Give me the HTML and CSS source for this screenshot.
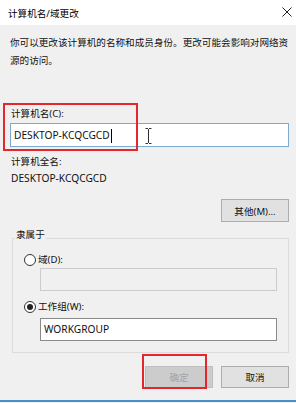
FILE: index.html
```html
<!DOCTYPE html>
<html>
<head>
<meta charset="utf-8">
<title>计算机名/域更改</title>
<link rel="stylesheet" href="styles.css">
</head>
<body>
<div class="dialog">
    <div class="titlebar">
        <span class="title">计算机名/域更改</span>
        <svg class="close" width="10" height="10" viewBox="0 0 10 10"><path d="M0.5 0.5 L9.5 9.5 M9.5 0.5 L0.5 9.5" stroke="#222" stroke-width="1" fill="none"/></svg>
    </div>
    <div class="content">
        <p class="desc">你可以更改该计算机的名称和成员身份。更改可能会影响对网络资源的访问。</p>

        <div class="name-field">
            <div class="label">计算机名(C):</div>
            <div class="textbox focused"><span class="latin">DESKTOP-KCQCGCD</span><span class="caret"></span>
                <svg class="ibeam" width="7" height="16" viewBox="0 0 7 16"><path d="M0.5 0.5 H3 M4 0.5 H6.5 M3.5 1 V15 M0.5 15.5 H3 M4 15.5 H6.5" stroke="#333" stroke-width="1" fill="none"/></svg>
            </div>
            <div class="mark mark-name"></div>
        </div>

        <div class="fullname">
            <div class="line">计算机全名:</div>
            <div class="line latin">DESKTOP-KCQCGCD</div>
        </div>

        <div class="row-right">
            <button type="button" class="btn">其他(M)...</button>
        </div>

        <fieldset class="group">
            <legend>隶属于</legend>
            <div class="radio-row"><span class="radio"></span>域(D):</div>
            <div class="textbox sub disabled"></div>
            <div class="radio-row second"><span class="radio checked"></span>工作组(W):</div>
            <div class="textbox sub"><span class="latin">WORKGROUP</span></div>
        </fieldset>

        <div class="actions">
            <div class="ok-wrap">
                <button type="button" class="btn" disabled>确定</button>
                <div class="mark mark-ok"></div>
            </div>
            <button type="button" class="btn">取消</button>
        </div>
    </div>
    <div class="footer-line"></div>
</div>
</body>
</html>
```

FILE: styles.css
```css
body {
    margin: 0;
    background: #f0f0f0;
    font-family: "Noto Sans", "Noto Sans CJK SC", sans-serif;
    font-size: 9.6px;
    color: #111;
}
.latin {
    font-size: 10.2px;
}
.dialog {
    width: 296px;
    height: 403px;
    overflow: hidden;
}
.titlebar {
    height: 25px;
    background: #fff;
    display: flex;
    align-items: center;
    justify-content: space-between;
    padding: 0 4px 0 8px;
}
.title {
    font-size: 9.6px;
    color: #000;
}
.close {
    margin-top: -1px;
}
.content {
    padding: 0 7px 0 10px;
}
.desc {
    margin: 9px 0 0 0;
    line-height: 18px;
    width: 280px;
}
.name-field {
    position: relative;
    margin-top: 35px;
}
.label {
    line-height: 18px;
    padding-left: 1px;
}
.textbox {
    position: relative;
    height: 23px;
    box-sizing: border-box;
    background: #fff;
    border: 1px solid #8a8a8a;
    padding-left: 3px;
    line-height: 21px;
}
.textbox.focused {
    height: 24px;
    line-height: 22px;
    border-color: #7ea9cf;
}
.caret {
    display: inline-block;
    width: 1px;
    height: 14px;
    background: #000;
    vertical-align: middle;
    margin-left: 1px;
}
.ibeam {
    position: absolute;
    left: 134px;
    top: 4px;
}
.mark {
    position: absolute;
    border: 2px solid #e5262c;
    box-sizing: border-box;
}
.mark-name {
    left: -7px;
    top: -2px;
    width: 135px;
    height: 48px;
}
.fullname {
    margin-top: 6px;
    padding-left: 1px;
}
.fullname .line {
    line-height: 17px;
}
.row-right {
    display: flex;
    justify-content: flex-end;
    margin-top: 12px;
}
.btn {
    font-family: "Noto Sans", "Noto Sans CJK SC", sans-serif;
    font-size: 9.6px;
    color: #111;
    width: 68px;
    height: 23px;
    padding: 0;
    background: #e1e1e1;
    border: 1px solid #adadad;
    border-radius: 0;
}
.btn:disabled {
    background: #cccccc;
    border-color: #bfbfbf;
    color: #a3a3a3;
}
.group {
    margin: 7px 0 0 2px;
    padding: 0 11px 11px 0;
    border: 1px solid #dcdcdc;
}
.group legend {
    margin-left: 2px;
    padding: 0 1px 6px 1px;
    line-height: 12px;
}
.radio-row {
    display: flex;
    align-items: center;
    line-height: 16px;
    margin: 5px 0 0 11px;
}
.radio-row.second {
    margin-top: 8px;
}
.radio {
    width: 12px;
    height: 12px;
    box-sizing: border-box;
    border: 1px solid #333;
    border-radius: 50%;
    background: #fff;
    margin-right: 2px;
    position: relative;
}
.radio.checked::after {
    content: "";
    position: absolute;
    left: 2px;
    top: 2px;
    width: 6px;
    height: 6px;
    border-radius: 50%;
    background: #222;
}
.textbox.sub {
    margin-left: 27px;
}
.textbox.disabled {
    background: #f0f0f0;
    border-color: #cccccc;
}
.radio-row.second + .textbox {
    margin-top: 3px;
}
.actions {
    display: flex;
    justify-content: flex-end;
    gap: 8px;
    margin-top: 13px;
}
.actions .btn {
    height: 22px;
}
.ok-wrap {
    position: relative;
}
.ok-wrap .btn {
    display: block;
}
.mark-ok {
    left: -3px;
    top: -12px;
    width: 65px;
    height: 35px;
}
.footer-line {
    margin-top: 12px;
    height: 2px;
    background: #4a8fc7;
}
```
